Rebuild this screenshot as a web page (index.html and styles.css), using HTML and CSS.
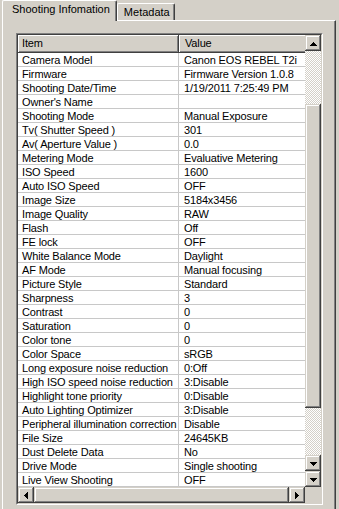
FILE: index.html
```html
<html>
<head>
    <meta charset="utf-8"/>
    <title>Shooting Infomation</title>
    <link rel="stylesheet" href="styles.css">
</head>
<body>
<div id="tabs">
    <div class="tab active">Shooting Infomation</div>
    <div class="tab">Metadata</div>
</div>
<div id="panel">
    <div class="listbox">
        <div class="listinner">
            <div class="grid">
                <div class="head">
                    <div class="hcell key">Item</div>
                    <div class="hcell val">Value</div>
                </div>
                <div class="row"><div class="k">Camera Model</div><div class="v">Canon EOS REBEL T2i</div></div>
                <div class="row"><div class="k">Firmware</div><div class="v">Firmware Version 1.0.8</div></div>
                <div class="row"><div class="k">Shooting Date/Time</div><div class="v">1/19/2011 7:25:49 PM</div></div>
                <div class="row"><div class="k">Owner's Name</div><div class="v"></div></div>
                <div class="row"><div class="k">Shooting Mode</div><div class="v">Manual Exposure</div></div>
                <div class="row"><div class="k">Tv( Shutter Speed )</div><div class="v">301</div></div>
                <div class="row"><div class="k">Av( Aperture Value )</div><div class="v">0.0</div></div>
                <div class="row"><div class="k">Metering Mode</div><div class="v">Evaluative Metering</div></div>
                <div class="row"><div class="k">ISO Speed</div><div class="v">1600</div></div>
                <div class="row"><div class="k">Auto ISO Speed</div><div class="v">OFF</div></div>
                <div class="row"><div class="k">Image Size</div><div class="v">5184x3456</div></div>
                <div class="row"><div class="k">Image Quality</div><div class="v">RAW</div></div>
                <div class="row"><div class="k">Flash</div><div class="v">Off</div></div>
                <div class="row"><div class="k">FE lock</div><div class="v">OFF</div></div>
                <div class="row"><div class="k">White Balance Mode</div><div class="v">Daylight</div></div>
                <div class="row"><div class="k">AF Mode</div><div class="v">Manual focusing</div></div>
                <div class="row"><div class="k">Picture Style</div><div class="v">Standard</div></div>
                <div class="row"><div class="k">Sharpness</div><div class="v">3</div></div>
                <div class="row"><div class="k">Contrast</div><div class="v">0</div></div>
                <div class="row"><div class="k">Saturation</div><div class="v">0</div></div>
                <div class="row"><div class="k">Color tone</div><div class="v">0</div></div>
                <div class="row"><div class="k">Color Space</div><div class="v">sRGB</div></div>
                <div class="row"><div class="k">Long exposure noise reduction</div><div class="v">0:Off</div></div>
                <div class="row"><div class="k">High ISO speed noise reduction</div><div class="v">3:Disable</div></div>
                <div class="row"><div class="k">Highlight tone priority</div><div class="v">0:Disable</div></div>
                <div class="row"><div class="k">Auto Lighting Optimizer</div><div class="v">3:Disable</div></div>
                <div class="row"><div class="k">Peripheral illumination correction</div><div class="v">Disable</div></div>
                <div class="row"><div class="k">File Size</div><div class="v">24645KB</div></div>
                <div class="row"><div class="k">Dust Delete Data</div><div class="v">No</div></div>
                <div class="row"><div class="k">Drive Mode</div><div class="v">Single shooting</div></div>
                <div class="row"><div class="k">Live View Shooting</div><div class="v">OFF</div></div>
            </div>

            <div class="vscroll">
                <div class="btn"><svg width="7" height="4" shape-rendering="crispEdges"><path d="M3 0h1v1h1v1h1v1h1v1H0V3h1V2h1V1h1z"/></svg></div>
                <div class="track t1"></div>
                <div class="thumb"></div>
                <div class="track t2"></div>
                <div class="btn"><svg width="7" height="4" shape-rendering="crispEdges"><path d="M0 0h7v1H6v1H5v1H4v1H3V3H2V2H1V1H0z"/></svg></div>
                <div class="btn"><svg width="7" height="4" shape-rendering="crispEdges"><path d="M0 0h7v1H6v1H5v1H4v1H3V3H2V2H1V1H0z"/></svg></div>
            </div>

            <div class="hscroll">
                <div class="btn"><svg width="4" height="7" shape-rendering="crispEdges"><path d="M3 0h1v7H3V6H2V5H1V4H0V3h1V2h1V1h1z"/></svg></div>
                <div class="thumb"></div>
                <div class="btn"><svg width="4" height="7" shape-rendering="crispEdges"><path d="M0 0h1v1h1v1h1v1h1v1H3v1H2v1H1v1H0z"/></svg></div>
            </div>
            <div class="corner"></div>
        </div>
    </div>
</div>
</body>
</html>
```

FILE: styles.css
```css
body, html {
    margin: 0px;
    padding: 0px;
}

body {
    width: 339px;
    height: 509px;
    overflow: hidden;
    background-color: #d4d0c8;
    font-family: 'Liberation Sans', Arial, sans-serif;
    font-size: 11px;
    color: #000000;
}

#tabs {
    display: flex;
    align-items: flex-end;
    height: 20px;
    padding-left: 2px;
}

.tab {
    position: relative;
    height: 17px;
    box-sizing: border-box;
    padding: 2px 4px 0px 6px;
    border-top: 1px solid #ffffff;
    border-left: 1px solid #ffffff;
    border-right: 1px solid #404040;
    border-radius: 2px 2px 0px 0px;
    box-shadow: inset -1px 0px #808080;
    white-space: nowrap;
}

.tab.active {
    height: 21px;
    margin-bottom: -1px;
    padding: 2px 6px 0px 9px;
    background-color: #d4d0c8;
    z-index: 1;
}

#panel {
    width: 334px;
    height: 489px;
    box-sizing: border-box;
    margin-left: 2px;
    border-top: 1px solid #ffffff;
    border-left: 1px solid #ffffff;
    border-right: 1px solid #404040;
    box-shadow: inset -1px 0px #808080;
    padding: 12px 0px 0px 13px;
}

.listbox {
    width: 307px;
    height: 472px;
    box-sizing: border-box;
    border: 1px solid;
    border-color: #808080 #ffffff #ffffff #808080;
}

.listinner {
    width: 100%;
    height: 100%;
    box-sizing: border-box;
    border: 1px solid;
    border-color: #404040 #d4d0c8 #d4d0c8 #404040;
    display: grid;
    grid-template-columns: 1fr 16px;
    grid-template-rows: 1fr 16px;
}

.grid {
    background-color: #ffffff;
    overflow: hidden;
    letter-spacing: -0.15px;
}

.head {
    display: flex;
    height: 18px;
}

.hcell {
    box-sizing: border-box;
    height: 18px;
    line-height: 17px;
    padding-left: 4px;
    background-color: #d4d0c8;
    box-shadow: inset -1px -1px #404040, inset 1px 1px #ffffff, inset -2px -2px #808080;
    white-space: nowrap;
}

.hcell.key {
    flex: 0 0 161px;
}

.hcell.val {
    flex: 0 0 140px;
    padding-left: 6px;
}

.row {
    display: flex;
    height: 14px;
    box-sizing: border-box;
    border-bottom: 1px solid #c8c8c8;
    line-height: 14px;
    white-space: nowrap;
}

.k {
    flex: 0 0 161px;
    box-sizing: border-box;
    padding-left: 4px;
    border-right: 1px solid #c8c8c8;
    overflow: hidden;
}

.v {
    flex: 0 0 140px;
    padding-left: 5px;
}

.btn {
    flex: 0 0 16px;
    width: 16px;
    height: 16px;
    box-sizing: border-box;
    background-color: #d4d0c8;
    box-shadow: inset -1px -1px #404040, inset 1px 1px #d4d0c8, inset -2px -2px #808080, inset 2px 2px #ffffff;
    display: flex;
    align-items: center;
    justify-content: center;
}

.btn svg {
    fill: #000000;
    margin: 1px 0px 0px 0px;
}

.vscroll {
    display: flex;
    flex-direction: column;
}

.track {
    background: repeating-conic-gradient(#d4d0c8 0 25%, #ffffff 0 50%) 0 0/2px 2px;
}

.t1 {
    height: 53px;
}

.t2 {
    height: 47px;
}

.thumb {
    background-color: #d4d0c8;
    box-shadow: inset -1px -1px #404040, inset 1px 1px #d4d0c8, inset -2px -2px #808080, inset 2px 2px #ffffff;
}

.vscroll .thumb {
    height: 304px;
}

.hscroll {
    display: flex;
}

.hscroll .thumb {
    flex: 1;
}

.corner {
    background-color: #d4d0c8;
}
```
